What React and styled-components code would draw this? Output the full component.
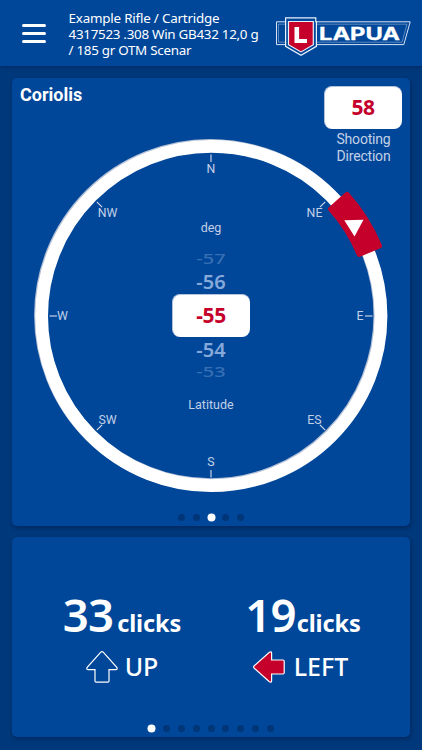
import React from "react";
import styled, { createGlobalStyle } from "styled-components";

const UI = `"Noto Sans", "Open Sans", sans-serif`;
const ROBOTO = `Roboto, "Noto Sans", sans-serif`;

const GlobalStyle = createGlobalStyle`
  * { box-sizing: border-box; }
  html, body { margin: 0; background: #00397b; }
`;

const Screen = styled.div`
  width: 422px;
  height: 750px;
  overflow: hidden;
  display: flex;
  flex-direction: column;
  background: #00397b;
  color: #fff;
  font-family: ${UI};
`;

const Header = styled.header`
  flex: none;
  height: 66px;
  display: flex;
  align-items: flex-start;
  background: #00479a;
  box-shadow: 0 1px 4px rgba(0, 25, 75, 0.5);
`;

const MenuButton = styled.button`
  display: flex;
  flex-direction: column;
  gap: 5px;
  margin: 24px 0 0 22px;
  padding: 0;
  border: 0;
  background: none;
`;

const MenuBar = styled.span`
  width: 24px;
  height: 3px;
  border-radius: 1.5px;
  background: #fff;
`;

const Profile = styled.div`
  width: 206.5px;
  margin: 10px 0 0 22.5px;
  font-size: 13.4px;
  line-height: 16px;
  white-space: nowrap;
`;

const ProfileLine = styled.div`
  letter-spacing: ${(p) => p.$track}px;
`;

const Logo = styled.svg`
  width: 136px;
  height: 42px;
  margin-top: 15px;
`;

const Main = styled.main`
  display: flex;
  flex-direction: column;
  gap: 11px;
  padding: 12px 12px 0;
`;

const Card = styled.section`
  width: 398px;
  height: ${(p) => p.$height}px;
  display: flex;
  flex-direction: column;
  border-radius: 5px;
  background: #00479a;
  box-shadow: 1px 2px 4px rgba(0, 25, 75, 0.55);
`;

const CardTop = styled.div`
  height: 60px;
  flex: none;
  display: flex;
  justify-content: space-between;
  padding: 8px 8px 0 8px;
`;

const Title = styled.h1`
  margin: 0;
  font: 700 18px/18px ${ROBOTO};
`;

const Direction = styled.div`
  width: 78px;
  display: flex;
  flex-direction: column;
  align-items: center;
`;

const ValueBox = styled.div`
  width: 78px;
  height: 43px;
  flex: none;
  border-radius: 8px;
  border: solid #b4c2da;
  border-width: 1px 0 0 1px;
  background: #fff;
  color: #c4002b;
  text-align: center;
  font: 700 21px/40px ${UI};
  letter-spacing: -0.4px;
  padding-right: 1px;
`;

const Caption = styled.div`
  margin-top: 2px;
  padding-left: 1px;
  font: 400 14px/17px ${ROBOTO};
  letter-spacing: -0.2px;
  text-align: center;
  color: #c3d0e6;
`;

const Dial = styled.div`
  display: grid;
  grid-template: 356px / 356px;
  margin-left: 21px;
  & > * { grid-area: 1 / 1; }
`;

const DialFace = styled.svg`
  width: 356px;
  height: 356px;
  overflow: visible;
  font-family: ${ROBOTO};
`;

const Picker = styled.div`
  display: flex;
  flex-direction: column;
  align-items: center;
  padding-top: 81px;
`;

const PickerLabel = styled.div`
  font: 400 12.5px/18px ${ROBOTO};
  color: #c3d0e6;
  margin-bottom: ${(p) => p.$below || 0}px;
  margin-top: ${(p) => p.$above || 0}px;
`;

const PickerRow = styled.div`
  height: ${(p) => p.$h}px;
  font: ${(p) => (p.$far ? 500 : 600)} 20px/${(p) => p.$h}px ${UI};
  color: ${(p) => (p.$far ? "#386fb4" : "#86a9da")};
  transform: scaleY(${(p) => (p.$far ? 0.76 : 0.97)});
`;

const Dots = styled.div`
  height: 9px;
  display: flex;
  justify-content: center;
  align-items: center;
  gap: 7.9px;
  margin: auto 0 ${(p) => p.$bottom}px;
`;

const Dot = styled.i`
  width: 7px;
  height: 7px;
  border-radius: 50%;
  background: ${(p) => (p.$on ? "#fff" : "#003577")};
  transform: scale(${(p) => (p.$on ? 1.15 : 1)});
`;

const Results = styled.div`
  display: grid;
  grid-template-columns: 182px 182px;
  padding: 47px 0 0 19px;
`;

const Result = styled.div`
  display: flex;
  flex-direction: column;
  align-items: center;
`;

const Clicks = styled.div`
  height: 60px;
  display: flex;
  align-items: baseline;
  gap: ${(p) => p.$gap}px;
  margin-right: ${(p) => p.$shift || 0}px;
  white-space: nowrap;
`;

const Count = styled.span`
  font: 600 45.5px/60px ${UI};
  letter-spacing: -0.8px;
`;

const Unit = styled.span`
  font: 700 23.5px/30px ${UI};
  letter-spacing: -0.1px;
`;

const Turn = styled.div`
  display: flex;
  align-items: center;
  gap: ${(p) => p.$gap}px;
  margin: 6px ${(p) => p.$shift}px 0 0;
  font: 500 25px/34px ${UI};
  letter-spacing: 0;
`;

const TurnLabel = styled.span`
  margin-top: -2px;
`;

const TurnIcon = styled.svg`
  width: 34px;
  height: 34px;
`;

const C = 178;

function polar(r, deg) {
  const a = (deg * Math.PI) / 180;
  return [C + r * Math.sin(a), C - r * Math.cos(a)];
}

function sector(r0, r1, from, to) {
  const [a, b, c, d] = [polar(r1, from), polar(r1, to), polar(r0, to), polar(r0, from)];
  return `M${a}A${r1} ${r1} 0 0 1 ${b}L${c}A${r0} ${r0} 0 0 0 ${d}Z`;
}

const POINTS = [
  { name: "N", deg: 0, x: 178, y: 35 },
  { name: "NE", deg: 45, x: 281.5, y: 78.8 },
  { name: "E", deg: 90, x: 327, y: 181.6 },
  { name: "ES", deg: 135, x: 281.5, y: 285.5 },
  { name: "S", deg: 180, x: 178, y: 328.3 },
  { name: "SW", deg: 225, x: 74.5, y: 285.5 },
  { name: "W", deg: 270, x: 29.5, y: 181.6 },
  { name: "NW", deg: 315, x: 74.5, y: 79 },
];

function Compass({ heading }) {
  return (
    <DialFace viewBox="0 0 356 356">
      <circle cx="177.3" cy="177.1" r="169.7" fill="none" stroke="#b4c0d6" strokeWidth="13" />
      <circle cx="178.3" cy="178" r="169.7" fill="none" stroke="#fff" strokeWidth="12.8" />
      {POINTS.map((p) => {
        const [x1, y1] = polar(161.5, p.deg);
        const [x2, y2] = polar(154, p.deg);
        return (
          <g key={p.name}>
            <line x1={x1} y1={y1} x2={x2} y2={y2} stroke="#d5deee" strokeWidth="1.1" />
            <text x={p.x} y={p.y} fontSize="12.3" fill="#c3d0e6" textAnchor="middle">{p.name}</text>
          </g>
        );
      })}
      <path
        d={sector(160.5, 182.5, heading - 9.8, heading + 9.4)}
        fill="#c4002b" stroke="#c4002b" strokeWidth="5" strokeLinejoin="round"
      />
      <path d="M311.3 82.2L330.5 81.7L321.5 98.5Z" fill="#fff" />
    </DialFace>
  );
}

function LapuaLogo() {
  return (
    <Logo viewBox="275 15 136 42">
      <g fill="none" stroke="#d8e4f4" strokeWidth="1">
        <path d="M276.5 21.8H410.2L403.8 44.6H276.5Z" />
        <path d="M278.5 24.2H407L402 42.2H278.5Z" strokeWidth="0.7" opacity="0.6" />
      </g>
      <path d="M285.6 17.8H315.8V21.8L316.4 22V46.3L301 55.3L285.6 46.3V22Z" fill="#00479a" stroke="#e9f1fb" strokeWidth="1.2" />
      <path d="M288.5 21.5H313.3V44.7L301 51.9L288.5 44.7Z" fill="#c4002b" stroke="#e9f1fb" strokeWidth="1.2" />
      <path d="M294.5 27H299.1V39H307V43H294.5Z" fill="#fff" />
      <text x="319" y="39.6" fill="#fff" stroke="#fff" strokeWidth="0.3" fontFamily="Inter, sans-serif" fontWeight="700" fontSize="17" textLength="81" lengthAdjust="spacingAndGlyphs">LAPUA</text>
    </Logo>
  );
}

function Arrow({ left }) {
  return (
    <TurnIcon viewBox="0 0 34 34">
      <path
        d="M15.8 2.2Q17 1 18.2 2.2L31.8 17.4Q33 19.6 30.7 19.6H24V31Q24 32.2 22.8 32.2H11.2Q10 32.2 10 31V19.6H3.3Q1 19.6 2.2 17.4Z"
        transform={left ? "rotate(-90 17 17)" : undefined}
        fill={left ? "#c4002b" : "none"} stroke="#fff" strokeWidth="1.2"
      />
    </TurnIcon>
  );
}

function Pager({ count, active, bottom }) {
  return (
    <Dots $bottom={bottom}>
      {Array.from({ length: count }, (_, i) => <Dot key={i} $on={i === active} />)}
    </Dots>
  );
}

export default function App() {
  return (
    <Screen>
      <GlobalStyle />
      <Header>
        <MenuButton aria-label="Menu"><MenuBar /><MenuBar /><MenuBar /></MenuButton>
        <Profile>
          <ProfileLine $track={-0.2}>Example Rifle / Cartridge</ProfileLine>
          <ProfileLine $track={-0.28}>4317523 .308 Win GB432 12,0 g</ProfileLine>
          <ProfileLine $track={-0.28}>/ 185 gr OTM Scenar</ProfileLine>
        </Profile>
        <LapuaLogo />
      </Header>
      <Main>
        <Card $height={448}>
          <CardTop>
            <Title>Coriolis</Title>
            <Direction>
              <ValueBox>58</ValueBox>
              <Caption>Shooting<br />Direction</Caption>
            </Direction>
          </CardTop>
          <Dial>
            <Compass heading={58} />
            <Picker>
              <PickerLabel $below={12}>deg</PickerLabel>
              <PickerRow $h={20} $far>-57</PickerRow>
              <PickerRow $h={25}>-56</PickerRow>
              <ValueBox>-55</ValueBox>
              <PickerRow $h={25}>-54</PickerRow>
              <PickerRow $h={20} $far>-53</PickerRow>
              <PickerLabel $above={14}>Latitude</PickerLabel>
            </Picker>
          </Dial>
          <Pager count={5} active={2} bottom={4} />
        </Card>
        <Card $height={200}>
          <Results>
            <Result>
              <Clicks $gap={4}><Count>33</Count><Unit>clicks</Unit></Clicks>
              <Turn $gap={6} $shift={1}><Arrow /><TurnLabel>UP</TurnLabel></Turn>
            </Result>
            <Result>
              <Clicks $gap={1} $shift={2}><Count>19</Count><Unit>clicks</Unit></Clicks>
              <Turn $gap={8} $shift={8}><Arrow left /><TurnLabel>LEFT</TurnLabel></Turn>
            </Result>
          </Results>
          <Pager count={9} active={0} bottom={4} />
        </Card>
      </Main>
    </Screen>
  );
}
